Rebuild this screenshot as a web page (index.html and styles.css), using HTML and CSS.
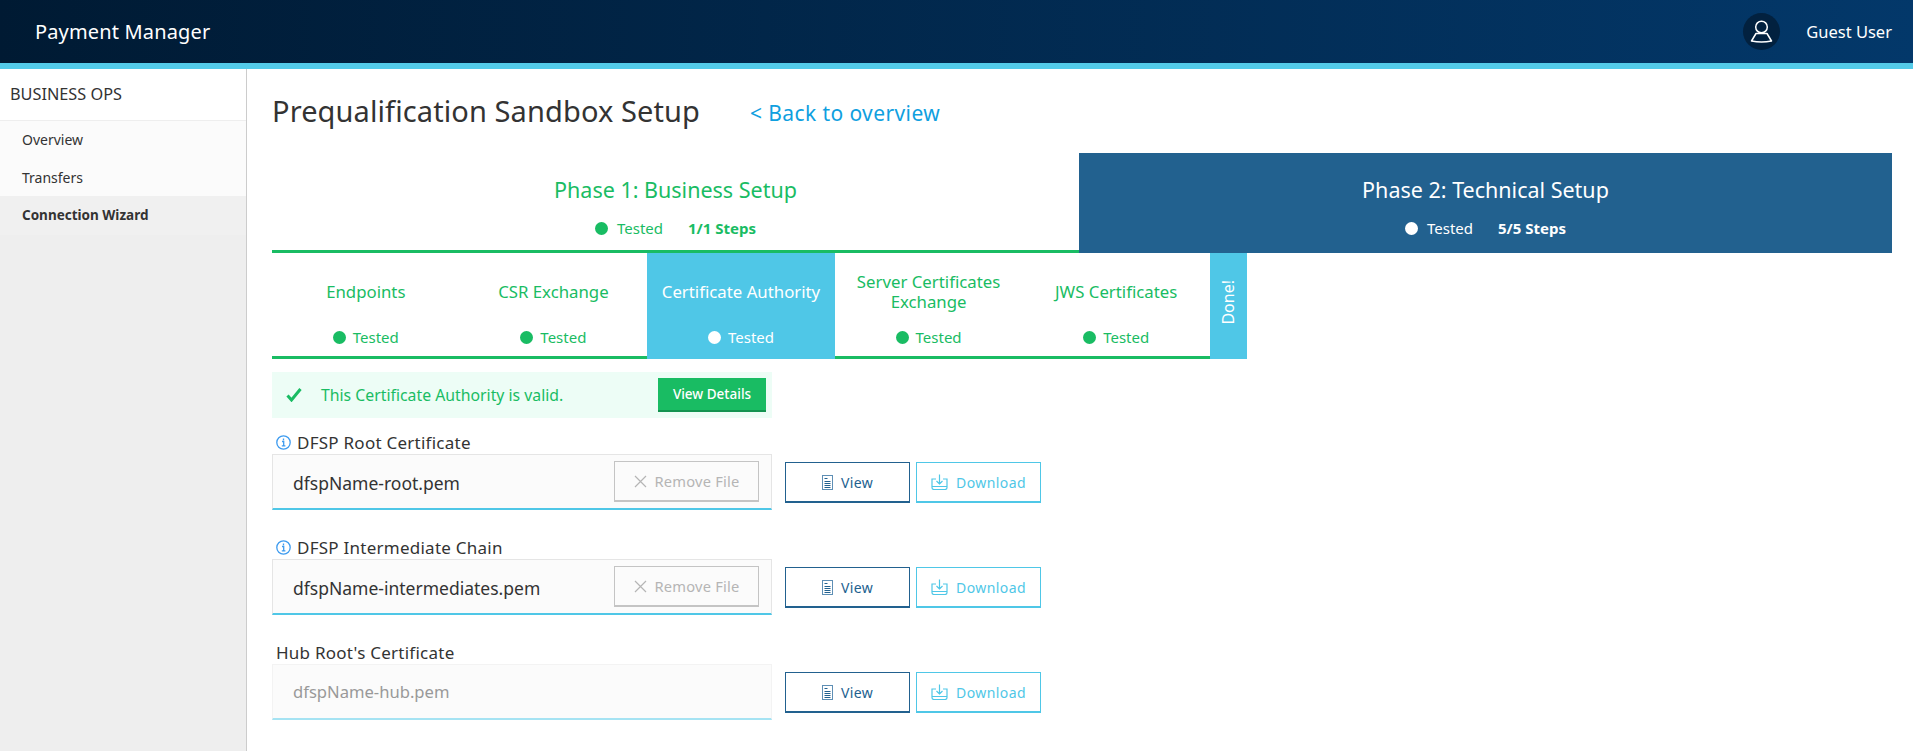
FILE: index.html
```html
<!DOCTYPE html>
<html lang="en">
<head>
    <meta charset="UTF-8">
    <title>Payment Manager</title>
    <link rel="stylesheet" href="styles.css">
</head>
<body>
    <header class="topbar">
        <div class="brand">Payment Manager</div>
        <div class="user">
            <span class="avatar">
                <svg width="23" height="23" viewBox="0 0 23 23" fill="none" stroke="#fff" stroke-width="1.500"><circle cx="11.500" cy="7" r="5.800"/><path d="M6 13.500H17L21.500 21Q11.500 22.800 1.500 21Z" stroke-linejoin="round"/></svg>
            </span>
            <span class="user-name">Guest User</span>
        </div>
    </header>
    <div class="layout">
        <aside class="sidebar">
            <div class="side-title">BUSINESS OPS</div>
            <ul class="side-menu">
                <li>Overview</li>
                <li>Transfers</li>
                <li class="active">Connection Wizard</li>
            </ul>
        </aside>
        <main class="content">
            <div class="page-head">
                <h1>Prequalification Sandbox Setup</h1>
                <a class="back-link" href="#">&lt; Back to overview</a>
            </div>

            <div class="phases">
                <div class="phase phase-done">
                    <div class="phase-title">Phase 1: Business Setup</div>
                    <div class="phase-status">
                        <span class="dot"></span><span>Tested</span><b>1/1 Steps</b>
                    </div>
                </div>
                <div class="phase phase-current">
                    <div class="phase-title">Phase 2: Technical Setup</div>
                    <div class="phase-status">
                        <span class="dot"></span><span>Tested</span><b>5/5 Steps</b>
                    </div>
                </div>
            </div>

            <div class="steps">
                <div class="step">
                    <div class="step-title">Endpoints</div>
                    <div class="step-status"><span class="dot"></span>Tested</div>
                </div>
                <div class="step">
                    <div class="step-title">CSR Exchange</div>
                    <div class="step-status"><span class="dot"></span>Tested</div>
                </div>
                <div class="step step-current">
                    <div class="step-title">Certificate Authority</div>
                    <div class="step-status"><span class="dot"></span>Tested</div>
                </div>
                <div class="step">
                    <div class="step-title">Server Certificates Exchange</div>
                    <div class="step-status"><span class="dot"></span>Tested</div>
                </div>
                <div class="step">
                    <div class="step-title">JWS Certificates</div>
                    <div class="step-status"><span class="dot"></span>Tested</div>
                </div>
                <div class="step-done"><span>Done!</span></div>
            </div>

            <div class="alert">
                <svg class="check" width="16" height="14" viewBox="0 0 16 14" fill="none" stroke="#19bc63" stroke-width="3"><path d="M1.500 7.500 5.500 12 14.500 1"/></svg>
                <span class="alert-text">This Certificate Authority is valid.</span>
                <button class="details-btn">View Details</button>
            </div>

            <div class="cert-row">
                <div class="cert-field">
                    <label class="cert-label">
                        <svg width="15" height="15" viewBox="0 0 15 15" fill="none" stroke="#3d9bef" stroke-width="1.300"><circle cx="7.500" cy="7.500" r="6.700"/><path d="M6 6.500h1.700v4.200M5.800 10.800h3.600M7.500 3.600v1.600"/></svg>
                        DFSP Root Certificate
                    </label>
                    <div class="file-input">
                        <span class="file-name">dfspName-root.pem</span>
                        <button class="remove-btn">
                            <svg width="13" height="13" viewBox="0 0 13 13" stroke="#b5b5b5" stroke-width="1.200"><path d="M1 1l11 11M12 1 1 12"/></svg>
                            Remove File
                        </button>
                    </div>
                </div>
                <button class="btn btn-view">
                    <svg width="11" height="15" viewBox="0 0 11 15"><path fill="#5e8fb5" d="M0 0h11v15H0z"/><path fill="#fff" d="M1 1h9v13H1z"/><path stroke="#22618f" d="M2.500 3.500h3M2.500 6.500h6M2.500 8.500h6M2.500 10.500h6M2.500 12.500h6"/></svg>
                    View
                </button>
                <button class="btn btn-download">
                    <svg width="17" height="16" viewBox="0 0 17 16" fill="none" stroke="#4fc7e7" stroke-width="1.200"><path d="M5 5H1v8.500Q1 15.500 3 15.500H14Q16 15.500 16 13.500V5H12M8.500 .5V10M5.500 7l3 3 3-3M1 12.500H16"/></svg>
                    Download
                </button>
            </div>

            <div class="cert-row">
                <div class="cert-field">
                    <label class="cert-label">
                        <svg width="15" height="15" viewBox="0 0 15 15" fill="none" stroke="#3d9bef" stroke-width="1.300"><circle cx="7.500" cy="7.500" r="6.700"/><path d="M6 6.500h1.700v4.200M5.800 10.800h3.600M7.500 3.600v1.600"/></svg>
                        DFSP Intermediate Chain
                    </label>
                    <div class="file-input">
                        <span class="file-name">dfspName-intermediates.pem</span>
                        <button class="remove-btn">
                            <svg width="13" height="13" viewBox="0 0 13 13" stroke="#b5b5b5" stroke-width="1.200"><path d="M1 1l11 11M12 1 1 12"/></svg>
                            Remove File
                        </button>
                    </div>
                </div>
                <button class="btn btn-view">
                    <svg width="11" height="15" viewBox="0 0 11 15"><path fill="#5e8fb5" d="M0 0h11v15H0z"/><path fill="#fff" d="M1 1h9v13H1z"/><path stroke="#22618f" d="M2.500 3.500h3M2.500 6.500h6M2.500 8.500h6M2.500 10.500h6M2.500 12.500h6"/></svg>
                    View
                </button>
                <button class="btn btn-download">
                    <svg width="17" height="16" viewBox="0 0 17 16" fill="none" stroke="#4fc7e7" stroke-width="1.200"><path d="M5 5H1v8.500Q1 15.500 3 15.500H14Q16 15.500 16 13.500V5H12M8.500 .5V10M5.500 7l3 3 3-3M1 12.500H16"/></svg>
                    Download
                </button>
            </div>

            <div class="cert-row">
                <div class="cert-field">
                    <label class="cert-label plain">Hub Root's Certificate</label>
                    <div class="file-input disabled">
                        <span class="file-name">dfspName-hub.pem</span>
                    </div>
                </div>
                <button class="btn btn-view">
                    <svg width="11" height="15" viewBox="0 0 11 15"><path fill="#5e8fb5" d="M0 0h11v15H0z"/><path fill="#fff" d="M1 1h9v13H1z"/><path stroke="#22618f" d="M2.500 3.500h3M2.500 6.500h6M2.500 8.500h6M2.500 10.500h6M2.500 12.500h6"/></svg>
                    View
                </button>
                <button class="btn btn-download">
                    <svg width="17" height="16" viewBox="0 0 17 16" fill="none" stroke="#4fc7e7" stroke-width="1.200"><path d="M5 5H1v8.500Q1 15.500 3 15.500H14Q16 15.500 16 13.500V5H12M8.500 .5V10M5.500 7l3 3 3-3M1 12.500H16"/></svg>
                    Download
                </button>
            </div>
        </main>
    </div>
</body>
</html>
```

FILE: styles.css
```css
* {
    box-sizing: border-box;
}
html, body {
    height: 100%;
}
body {
    margin: 0;
    font-family: "Noto Sans", "Open Sans", sans-serif;
    color: #333;
    background-color: #fff;
    overflow: hidden;
}
.topbar {
    height: 69px;
    border-bottom: 6px solid #53cbe9;
    background: linear-gradient(to right, #001a33, #03386a);
    color: #fff;
    display: flex;
    justify-content: space-between;
    align-items: center;
    padding: 0 21px 0 35px;
}
.brand {
    font-size: 20px;
    letter-spacing: 0.15px;
}
.user {
    display: flex;
    align-items: center;
    gap: 26px;
}
.avatar {
    width: 37px;
    height: 37px;
    border-radius: 50%;
    background-color: #02213f;
    display: flex;
    justify-content: center;
    align-items: center;
}
.user-name {
    font-size: 16.500px;
}
.layout {
    display: flex;
    height: calc(100% - 69px);
}
.sidebar {
    width: 247px;
    background-color: #eee;
    border-right: 1px solid #ccc;
    flex-shrink: 0;
}
.side-title {
    height: 52px;
    background-color: #fff;
    border-bottom: 1px solid #eee;
    padding: 0 10px;
    line-height: 51px;
    font-size: 16.300px;
}
.side-menu {
    list-style: none;
    margin: 0;
    padding: 0;
    background-color: #fbfbfb;
}
.side-menu li {
    height: 37.500px;
    line-height: 38px;
    padding-left: 22px;
    font-size: 14px;
}
.side-menu li.active {
    height: 39px;
    background-color: #f0f0f0;
    font-weight: 700;
    font-size: 13.500px;
}
.content {
    flex: 1;
    padding: 0 21px 0 25px;
}
.page-head {
    height: 84px;
    display: flex;
    align-items: center;
    gap: 50px;
}
h1 {
    margin: 0 0 2px;
    font-size: 29px;
    font-weight: 400;
    letter-spacing: 0.1px;
}
.back-link {
    color: #0f9fdf;
    font-size: 21px;
    letter-spacing: 0.4px;
    margin-top: 4px;
    text-decoration: none;
}
.phases {
    display: flex;
    height: 100px;
}
.phase {
    flex: 1;
    padding-top: 23px;
    text-align: center;
}
.phase-done {
    flex: none;
    width: 807px;
    color: #19bc63;
    border-bottom: 3px solid #19bc63;
}
.phase-current {
    background-color: #22618f;
    color: #fff;
}
.phase-title {
    font-size: 21.500px;
    line-height: 28px;
}
.phase-status {
    margin-top: 14px;
    display: flex;
    justify-content: center;
    align-items: center;
    font-size: 15px;
    line-height: 20px;
}
.phase-status .dot {
    margin-right: 9px;
}
.phase-status b {
    margin-left: 25px;
    font-size: 15px;
}
.dot {
    display: inline-block;
    width: 13px;
    height: 13px;
    border-radius: 50%;
    background-color: #19bc63;
    margin-right: 7px;
}
.phase-current .dot,
.step-current .dot {
    background-color: #fff;
}
.steps {
    display: flex;
    height: 106px;
}
.step {
    width: 187.600px;
    border-bottom: 3px solid #19bc63;
    color: #19bc63;
    padding-top: 15px;
    text-align: center;
}
.step-current {
    background-color: #4fc7e7;
    border-bottom-color: #4fc7e7;
    color: #fff;
}
.step-title {
    height: 48px;
    display: flex;
    justify-content: center;
    align-items: center;
    font-size: 16.800px;
    line-height: 20px;
    padding: 0 5px;
}
.step-status {
    margin-top: 11px;
    display: flex;
    justify-content: center;
    align-items: center;
    font-size: 15px;
    line-height: 20px;
}
.step-done {
    width: 37px;
    background-color: #4fc7e7;
    color: #fff;
    font-size: 16px;
    display: flex;
    justify-content: center;
    align-items: center;
    padding-bottom: 8px;
}
.step-done span {
    writing-mode: vertical-rl;
    transform: rotate(180deg);
}
.alert {
    width: 500px;
    height: 46px;
    margin-top: 13px;
    padding: 0 6px 0 14px;
    background-color: #edfdf6;
    color: #19bc63;
    display: flex;
    align-items: center;
}
.alert-text {
    flex: 1;
    margin-left: 19px;
    font-size: 15.800px;
}
.details-btn {
    width: 108px;
    height: 34px;
    border: none;
    border-bottom: 2px solid #149350;
    background-color: #19bc63;
    color: #fff;
    font-family: inherit;
    font-size: 13.500px;
    font-weight: 500;
}
.cert-row {
    display: flex;
    margin-top: 14px;
}
.cert-row + .cert-row {
    margin-top: 27px;
}
.cert-field {
    width: 500px;
    margin-right: 13px;
}
.cert-label {
    display: flex;
    align-items: center;
    gap: 6px;
    height: 20px;
    padding-left: 4px;
    margin-bottom: 2px;
    font-size: 17px;
    letter-spacing: 0.25px;
}
.file-input {
    height: 56px;
    background-color: #fbfbfb;
    border: 1px solid #e5e5e5;
    border-bottom: 2px solid #4fc7e7;
    padding: 0 12px 0 20px;
    display: flex;
    justify-content: space-between;
    align-items: center;
    font-size: 17.500px;
}
.file-name {
    padding-top: 3px;
}
.file-input.disabled {
    border-color: #f3f3f3;
    border-bottom-color: #a5e3f3;
    color: #999;
    font-size: 16.600px;
}
.file-input.disabled .file-name {
    padding-top: 0;
}
.remove-btn {
    width: 145px;
    height: 41px;
    background-color: #fbfbfb;
    border: 1px solid #c4c4c4;
    border-bottom-width: 2px;
    color: #b5b5b5;
    font-family: inherit;
    font-size: 14.700px;
    letter-spacing: 0.2px;
    display: flex;
    justify-content: center;
    align-items: center;
    gap: 8px;
}
.btn {
    width: 125px;
    height: 41px;
    margin: 30px 6px 0 0;
    background-color: #fff;
    font-family: inherit;
    font-size: 14px;
    letter-spacing: 0.4px;
    display: flex;
    justify-content: center;
    align-items: center;
    gap: 8px;
}
.btn-view {
    border: 1px solid #22618f;
    border-bottom-width: 2px;
    color: #22618f;
}
.btn-download {
    border: 1px solid #4fc7e7;
    border-bottom-width: 2px;
    color: #4fc7e7;
}
```
